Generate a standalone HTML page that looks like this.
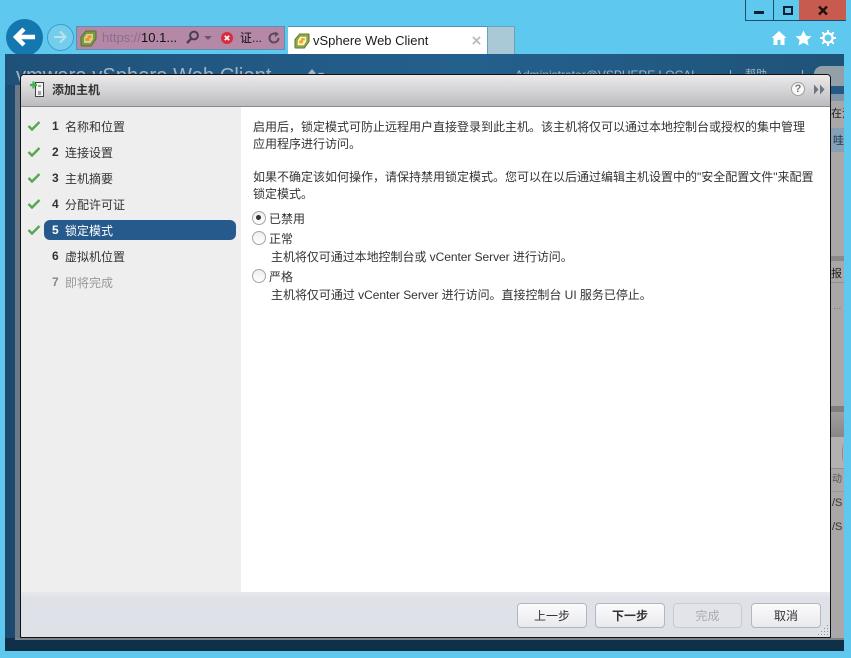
<!DOCTYPE html>
<html><head><meta charset="utf-8">
<style>
html,body{margin:0;padding:0}
body{width:851px;height:658px;overflow:hidden;position:relative;background:#5fc8ee;font-family:"Liberation Sans","WenQuanYi Zen Hei","Noto Sans CJK SC",sans-serif;font-size:12px;color:#333}
div,span,svg{position:absolute;white-space:nowrap}
.t{line-height:18px;height:18px}
.n{font-weight:bold;left:52px;color:#333}
.l{left:65px;color:#333}
.btn{top:603px;height:23px;border:1px solid #b4b6bc;border-radius:4px;background:linear-gradient(#fbfbfc,#e9eaee);text-align:center;line-height:24px;color:#333;box-sizing:content-box}
</style></head><body>
<!-- window controls -->
<div style="left:745px;top:0;width:54px;height:20px;background:#5fc8ee;border-left:1px solid #1c4f70;border-bottom:1px solid #1c4f70"></div>
<div style="left:773px;top:0;width:1px;height:20px;background:#1c4f70"></div>
<div style="left:799px;top:0;width:47px;height:20px;background:#c75b50;border-bottom:1px solid #1c4f70"></div>
<div style="left:754px;top:11px;width:10px;height:3px;background:#0b2233"></div>
<div style="left:783px;top:6px;width:6px;height:5px;border:2px solid #0b2233"></div>
<svg style="left:817px;top:5px" width="12" height="11" viewBox="0 0 12 11"><path d="M2 1.5L10 9.5M10 1.5L2 9.5" stroke="#20110f" stroke-width="2.4"/></svg>

<!-- nav buttons -->
<div style="left:6px;top:19px;width:37px;height:37px;border-radius:50%;background:#1577b0"></div>
<svg style="left:13px;top:27px" width="24" height="20" viewBox="0 0 24 20"><path d="M11 2L3 10L11 18M3.5 10H22" fill="none" stroke="#fff" stroke-width="4.4"/></svg>
<div style="left:47px;top:24px;width:25px;height:25px;border-radius:50%;border:1px solid #3d9cc9;background:#75cdec"></div>
<svg style="left:52px;top:29px" width="16" height="16" viewBox="0 0 16 16"><path d="M8 2.5L13.5 8L8 13.5M13 8H2" fill="none" stroke="#b9e2f2" stroke-width="2"/></svg>

<!-- address bar -->
<div style="left:76px;top:26px;width:207px;height:22px;background:#b488a6;border:1px solid #5e90ad"></div>
<svg style="left:80px;top:30px" width="17" height="17" viewBox="0 0 17 17"><path d="M6 1H15.5Q16 1 16 2V9L11 16H2Q1 16 1 15V7Z" fill="#7f9a3e" stroke="#586f33"/><path d="M6.5 4H13V9L10.5 13H4V8Z" fill="#d9cfa0"/><path d="M7.5 5.5H11.5V8H9.5V11H5.5V8H7.5Z" fill="#e8991f"/></svg>
<div class="t" style="left:102px;top:29px;color:#8a6f87;font-size:13px">https://<span style="position:static;color:#111">10.1...</span></div>
<svg style="left:185px;top:30px" width="15" height="15" viewBox="0 0 15 15"><circle cx="9" cy="5.5" r="3.9" fill="none" stroke="#4d3f4c" stroke-width="2"/><path d="M6 8.8L2 13" stroke="#4d3f4c" stroke-width="2.4"/></svg>
<div style="left:204px;top:36px;border:4px solid transparent;border-top:4px solid #6c5569;border-bottom:0"></div>
<div style="left:221px;top:32px;width:12px;height:12px;border-radius:50%;background:#d82c3e"></div>
<svg style="left:221px;top:32px" width="12" height="12" viewBox="0 0 12 12"><path d="M3.8 3.8L8.2 8.2M8.2 3.8L3.8 8.2" stroke="#fff" stroke-width="1.7"/></svg>
<div class="t" style="left:240px;top:29px;color:#111;font-size:12px">证...</div>
<svg style="left:267px;top:31px" width="14" height="14" viewBox="0 0 14 14"><path d="M11.5 7A4.5 4.5 0 1 1 9 3" fill="none" stroke="#5b4a59" stroke-width="2"/><path d="M8 0.5L12 3L8 6Z" fill="#5b4a59"/></svg>

<!-- tabs -->
<div style="left:288px;top:26px;width:199px;height:28px;background:#fff;border-top:1px solid #5e90ad"></div>
<div style="left:487px;top:26px;width:26px;height:27px;background:#a9c9d6;border:1px solid #6aa2bd;border-bottom:0"></div>
<svg style="left:294px;top:33px" width="16" height="16" viewBox="0 0 17 17"><path d="M6 1H15.5Q16 1 16 2V9L11 16H2Q1 16 1 15V7Z" fill="#8ca83f" stroke="#5d7535"/><path d="M6.5 4H13V9L10.5 13H4V8Z" fill="#fff4c9"/><path d="M7.5 5.5H11.5V8H9.5V11H5.5V8H7.5Z" fill="#eea81f"/></svg>
<div class="t" style="left:313px;top:32px;font-size:13px;color:#1b1b1b">vSphere Web Client</div>
<svg style="left:472px;top:36px" width="9" height="9" viewBox="0 0 10 10"><path d="M1 1L9 9M9 1L1 9" stroke="#b4bcc0" stroke-width="2"/></svg>

<!-- tool icons -->
<svg style="left:771px;top:30px" width="16" height="16" viewBox="0 0 16 16"><path d="M8 1L15.5 8H13.5V15H9.5V10H6.5V15H2.5V8H0.5Z" fill="#fff"/></svg>
<svg style="left:795px;top:30px" width="17" height="16" viewBox="0 0 17 16"><path d="M8.5 0.5L11 5.8L16.5 6.3L12.4 10L13.6 15.5L8.5 12.7L3.4 15.5L4.6 10L0.5 6.3L6 5.8Z" fill="#fff"/></svg>
<svg style="left:820px;top:30px" width="16" height="16" viewBox="0 0 16 16"><circle cx="8" cy="8" r="4.6" fill="none" stroke="#fff" stroke-width="2.2"/><path d="M8 0V3M8 13V16M0 8H3M13 8H16M2.3 2.3L4.4 4.4M11.6 11.6L13.7 13.7M13.7 2.3L11.6 4.4M4.4 11.6L2.3 13.7" stroke="#fff" stroke-width="2"/></svg>

<!-- app background -->
<div style="left:5px;top:54px;width:839px;height:597px;background:#10304a"></div>
<div style="left:5px;top:54px;width:839px;height:32px;background:linear-gradient(90deg,#1f5178,#24608e 55%,#1f5378)"></div>
<div style="left:16px;top:64px;color:#a3b5c5;font-size:20px;height:24px;line-height:24px;letter-spacing:.1px">vmware<span style="position:static"> vSphere Web Client</span></div>
<div class="t" style="left:306px;top:66px;color:#a3b5c5;font-size:12px">⬆▾</div>
<div class="t" style="left:515px;top:66px;color:#a3b5c5;font-size:12px">Administrator@VSPHERE.LOCAL</div>
<div class="t" style="left:745px;top:66px;color:#a3b5c5;font-size:11px">帮助</div>
<div style="left:730px;top:70px;width:1px;height:5px;background:#a3b5c5"></div>
<div style="left:802px;top:70px;width:1px;height:5px;background:#a3b5c5"></div>
<div style="left:814px;top:66px;width:30px;height:20px;background:#93a0a8;border-radius:8px 0 0 0"></div>
<div style="left:15px;top:85px;width:5px;height:553px;background:#6b7a89"></div>
<div style="left:5px;top:85px;width:10px;height:553px;background:#1b4a6e"></div>
<div style="left:15px;top:638px;width:829px;height:2px;background:#7c8388"></div>
<!-- right strip -->
<div style="left:831px;top:86px;width:13px;height:552px;background:#a9a7a7"></div>
<div style="left:831px;top:86px;width:13px;height:8px;background:#245a84"></div>
<div style="left:831px;top:94px;width:13px;height:7px;background:#7f95a8"></div>
<div style="left:831px;top:128px;width:13px;height:24px;background:#88a0b6"></div>
<div style="left:831px;top:256px;width:13px;height:5px;background:#8a8a8a"></div>
<div style="left:831px;top:282px;width:13px;height:1px;background:#8f8f8f"></div>
<div style="left:831px;top:406px;width:13px;height:6px;background:#7f7f7f"></div>
<div style="left:831px;top:412px;width:13px;height:25px;background:linear-gradient(#a0a0a0,#878787)"></div>
<div style="left:831px;top:437px;width:13px;height:31px;background:#b3b2b2"></div>
<div style="left:831px;top:468px;width:13px;height:1px;background:#8f8f8f"></div>
<div style="left:831px;top:491px;width:13px;height:1px;background:#999"></div>
<div style="left:842px;top:444px;width:2px;height:18px;border-left:1px solid #8a8a8a;border-radius:50%"></div>
<div class="t" style="left:831px;top:105px;font-size:11px;color:#222;width:13px;overflow:hidden">在汀</div>
<div class="t" style="left:833px;top:132px;font-size:11px;color:#17324a;width:11px;overflow:hidden">哇</div>
<div class="t" style="left:831px;top:265px;font-size:11px;color:#222;width:13px;overflow:hidden">报</div>
<div class="t" style="left:833px;top:298px;font-size:10px;color:#777">...</div>
<div class="t" style="left:832px;top:471px;font-size:10px;color:#555;width:12px;overflow:hidden">动</div>
<div class="t" style="left:832px;top:494px;font-size:11px;color:#333;width:12px;overflow:hidden">/S</div>
<div class="t" style="left:832px;top:518px;font-size:11px;color:#333;width:12px;overflow:hidden">/S</div>

<!-- dialog -->
<div style="left:20px;top:74px;width:809px;height:562px;border:1px solid #111;border-radius:4px 4px 2px 2px;background:#fff;overflow:hidden">
 <div style="left:0;top:0;width:810px;height:31px;background:linear-gradient(#eceaeb,#bcbcbf);border-bottom:1px solid #8a8b8e"></div>
 <div style="left:0;top:32px;width:220px;height:486px;background:#eeeeee"></div>
 <div style="left:0;top:517px;width:810px;height:46px;background:linear-gradient(#e8e9ee,#dfe1e8 6px)"></div>
</div>

<!-- dialog title -->
<svg style="left:30px;top:81px" width="16" height="18" viewBox="0 0 16 18"><rect x="5.5" y="1.5" width="8" height="14" fill="#f4f4f4" stroke="#444"/><path d="M8 5H11M8 11H11M8 13H11" stroke="#555"/><path d="M3.5 0.5V7.5M0 4H7" stroke="#3fb24a" stroke-width="2.2"/></svg>
<div class="t" style="left:52px;top:81px;font-weight:bold;color:#333">添加主机</div>
<div style="left:791px;top:82px;width:12px;height:12px;border-radius:50%;background:#f8f8f8;border:1px solid #a0a0a0;text-align:center;line-height:13px;font-size:11px;font-weight:bold;color:#777">?</div>
<svg style="left:813px;top:84px" width="12" height="11" viewBox="0 0 12 11"><path d="M1 0.5L5.5 5.5L1 10.5ZM7 0.5L11.5 5.5L7 10.5Z" fill="#6c7680"/></svg>

<!-- nav -->
<div style="left:44px;top:220px;width:192px;height:20px;background:#275a8c;border-radius:6px"></div>
<svg style="left:27px;top:120px" width="14" height="12" viewBox="0 0 14 12"><path d="M1.5 6L5 9.5L12.5 2" fill="none" stroke="#55a84f" stroke-width="2.4"/></svg>
<svg style="left:27px;top:146px" width="14" height="12" viewBox="0 0 14 12"><path d="M1.5 6L5 9.5L12.5 2" fill="none" stroke="#55a84f" stroke-width="2.4"/></svg>
<svg style="left:27px;top:172px" width="14" height="12" viewBox="0 0 14 12"><path d="M1.5 6L5 9.5L12.5 2" fill="none" stroke="#55a84f" stroke-width="2.4"/></svg>
<svg style="left:27px;top:198px" width="14" height="12" viewBox="0 0 14 12"><path d="M1.5 6L5 9.5L12.5 2" fill="none" stroke="#55a84f" stroke-width="2.4"/></svg>
<svg style="left:27px;top:224px" width="14" height="12" viewBox="0 0 14 12"><path d="M1.5 6L5 9.5L12.5 2" fill="none" stroke="#55a84f" stroke-width="2.4"/></svg>

<div class="t n" style="top:117px">1</div><div class="t l" style="top:118px">名称和位置</div>
<div class="t n" style="top:143px">2</div><div class="t l" style="top:144px">连接设置</div>
<div class="t n" style="top:169px">3</div><div class="t l" style="top:170px">主机摘要</div>
<div class="t n" style="top:195px">4</div><div class="t l" style="top:196px">分配许可证</div>
<div class="t n" style="top:221px;color:#fff">5</div><div class="t l" style="top:222px;color:#fff">锁定模式</div>
<div class="t n" style="top:247px">6</div><div class="t l" style="top:248px">虚拟机位置</div>
<div class="t n" style="top:273px;color:#888">7</div><div class="t l" style="top:274px;color:#999">即将完成</div>

<!-- content -->
<div class="t" style="left:253px;top:118px">启用后，锁定模式可防止远程用户直接登录到此主机。该主机将仅可以通过本地控制台或授权的集中管理</div>
<div class="t" style="left:253px;top:135px">应用程序进行访问。</div>
<div class="t" style="left:253px;top:168px">如果不确定该如何操作，请保持禁用锁定模式。您可以在以后通过编辑主机设置中的"安全配置文件"来配置</div>
<div class="t" style="left:253px;top:185px">锁定模式。</div>

<div style="left:252px;top:211px;width:12px;height:12px;border-radius:50%;border:1px solid #a5a5a5;background:linear-gradient(#eee,#fff)"></div>
<div style="left:256px;top:215px;width:5px;height:5px;border-radius:50%;background:#333"></div>
<div class="t" style="left:269px;top:210px">已禁用</div>
<div style="left:252px;top:231px;width:12px;height:12px;border-radius:50%;border:1px solid #a5a5a5;background:linear-gradient(#eee,#fff)"></div>
<div class="t" style="left:269px;top:230px">正常</div>
<div class="t" style="left:271px;top:248px;letter-spacing:-.05px">主机将仅可通过本地控制台或 vCenter Server 进行访问。</div>
<div style="left:252px;top:269px;width:12px;height:12px;border-radius:50%;border:1px solid #a5a5a5;background:linear-gradient(#eee,#fff)"></div>
<div class="t" style="left:269px;top:268px">严格</div>
<div class="t" style="left:271px;top:286px;letter-spacing:-.03px">主机将仅可通过 vCenter Server 进行访问。直接控制台 UI 服务已停止。</div>

<!-- buttons -->
<div class="btn" style="left:517px;width:68px">上一步</div>
<div class="btn" style="left:595px;width:68px;font-weight:bold">下一步</div>
<div class="btn" style="left:673px;width:67px;color:#a9abb0;background:#e3e4e9;border-color:#c9cbd1">完成</div>
<div class="btn" style="left:751px;width:68px">取消</div>
<svg style="left:817px;top:624px" width="12" height="12" viewBox="0 0 12 12"><path d="M10 1h1v1h-1zM7 4h1v1H7zM10 4h1v1h-1zM4 7h1v1H4zM7 7h1v1H7zM10 7h1v1h-1zM1 10h1v1H1zM4 10h1v1H4zM7 10h1v1H7zM10 10h1v1h-1z" fill="#8f9197"/></svg>
</body></html>
